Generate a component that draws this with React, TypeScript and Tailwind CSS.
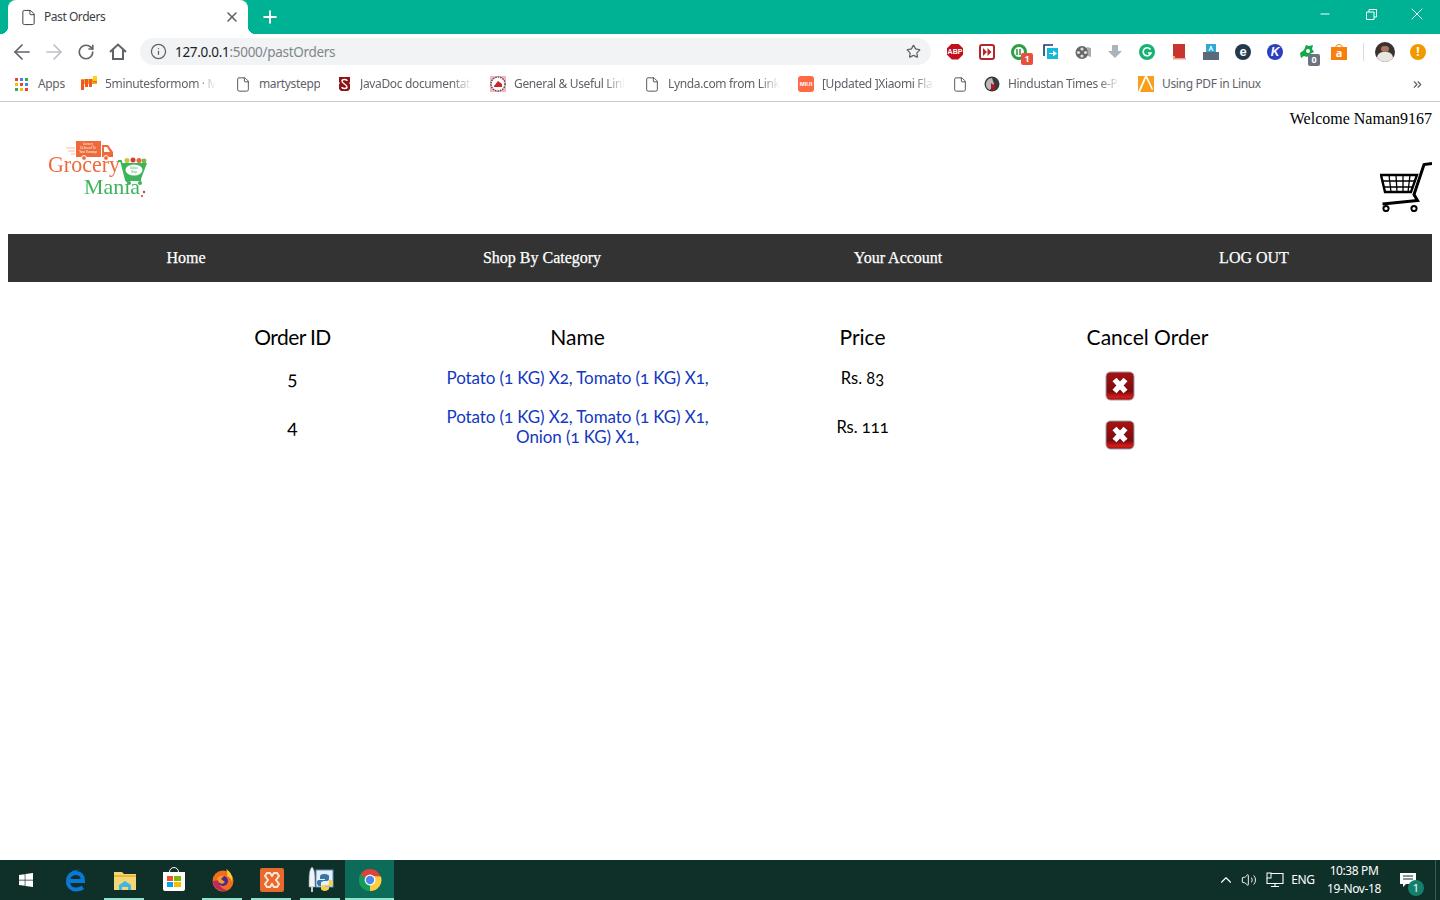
import { ArrowLeft, ArrowRight, ChevronsRight, ChevronUp, File, Info, Minus, Plus, RotateCw, Star, Volume2, X } from "lucide-react";
import { FaWindows } from "react-icons/fa";
import type { ReactNode } from "react";

const uiFont = "font-['Noto_Sans','Open_Sans',sans-serif]";

function AppsIcon() {
  const colors = ["#ea4335", "#4285f4", "#34a853", "#fbbc05", "#ea4335", "#4285f4", "#34a853", "#fbbc05", "#ea4335"];
  return (
    <div className="grid grid-cols-3 gap-[2px] w-[13px] h-[13px]">
      {colors.map((c, i) => (
        <span key={i} className="w-[3px] h-[3px]" style={{ background: c }} />
      ))}
    </div>
  );
}

function PageIcon() {
  return <File size={17} strokeWidth={1.4} className="text-[#4a4d51]" />;
}

function FiveMinIcon() {
  return (
    <svg width="16" height="16" viewBox="0 0 16 16">
      <rect x="0" y="3" width="16" height="5" fill="#f7a11a" />
      <path d="M0 4h3v10H0zM4 3h3v8H4zM8 3h3v8H8zM12 1l4-1v6h-4z" fill="#ef5a24" />
      <path d="M12 0h4v5h-4z" fill="#fbd11a" />
    </svg>
  );
}

function StanfordIcon() {
  return (
    <svg width="13" height="16" viewBox="0 0 13 16">
      <path d="M1 1h11v5l-1 1 1 1v5l-2 2H3l-2-2V8l1-1-1-1z" fill="#8c1515" />
      <path d="M4 5c0-2 5-2 5 0M4 5c0 3 5 3 5 6 0 2-5 2-5 0" fill="none" stroke="#fff" strokeWidth="1.4" />
    </svg>
  );
}

function SealIcon() {
  return (
    <svg width="16" height="16" viewBox="0 0 16 16">
      <rect width="16" height="16" fill="#f7b2c4" />
      <circle cx="8" cy="8" r="7" fill="#fff" stroke="#4a4a3a" strokeWidth="1.4" strokeDasharray="1.5 1" />
      <path d="M4 10l4-5 4 3v3H4z" fill="#c8262c" />
    </svg>
  );
}

function MiuiIcon() {
  return (
    <div className="w-4 h-4 rounded-[3px] bg-[#ff6a45] flex items-center justify-center text-white text-[6px] font-bold tracking-normal font-['Liberation_Sans',sans-serif]">
      MIUI
    </div>
  );
}

function CursorIcon() {
  return (
    <svg width="16" height="16" viewBox="0 0 16 16">
      <circle cx="8" cy="8" r="7.5" fill="#3a3a3a" />
      <path d="M2 8a6 6 0 0 1 6-6l2 6-4 6a6 6 0 0 1-4-6z" fill="#bbb" />
      <path d="M7 7l5 4-2 .5 1 3-1.5.5-1-3-1.5 1z" fill="#c8101a" />
    </svg>
  );
}

function PdfIcon() {
  return (
    <svg width="16" height="16" viewBox="0 0 16 16">
      <rect width="16" height="16" fill="#f8a01c" />
      <path d="M0 16L7 0h2L2 16zM9 0l6 13-1 1L8 2z" fill="#fff" />
    </svg>
  );
}

function Bookmark({ icon, label, width, fade }: { icon: ReactNode; label: string; width?: string; fade?: boolean }) {
  return (
    <div className="flex items-center gap-2 shrink-0">
      <div className="w-4 flex justify-center">{icon}</div>
      <span className={`${width ?? ""} overflow-hidden whitespace-nowrap ${fade ? "[mask-image:linear-gradient(to_right,black_82%,transparent)]" : ""}`}>{label}</span>
    </div>
  );
}

function Slot({ children }: { children: ReactNode }) {
  return <div className="w-8 flex justify-center items-center shrink-0">{children}</div>;
}

function ExtensionIcons() {
  return (
    <div className="flex items-center">
      <Slot>
        <div className="w-4 h-4 bg-[#c4101c] [clip-path:polygon(30%_0,70%_0,100%_30%,100%_70%,70%_100%,30%_100%,0_70%,0_30%)] text-white text-[7px] font-bold leading-4 text-center font-['Liberation_Sans',sans-serif]">ABP</div>
      </Slot>
      <Slot>
        <div className="w-4 h-4 rounded-[3px] border-2 border-[#b3262c] flex items-center justify-center">
          <svg width="9" height="8" viewBox="0 0 9 8"><path d="M0 0l4 4-4 4zM4.500 0l4 4-4 4z" fill="#b3262c" /></svg>
        </div>
      </Slot>
      <Slot>
        <div className="relative">
          <svg width="16" height="16" viewBox="0 0 16 16">
            <circle cx="8" cy="8" r="6.500" fill="none" stroke="#2f9e44" strokeWidth="3" />
            <path d="M6 5v6M9 5v6" stroke="#2f9e44" strokeWidth="1.6" />
          </svg>
          <span className="absolute left-[10px] top-[9px] w-3 h-3 rounded-[2px] bg-[#e8503e] text-white text-[9px] font-bold leading-3 text-center">1</span>
        </div>
      </Slot>
      <Slot>
        <svg width="16" height="16" viewBox="0 0 16 16">
          <path d="M1 12V1h9" fill="none" stroke="#133d6b" strokeWidth="1.6" />
          <rect x="4" y="4" width="11" height="11" fill="#16b8dc" />
          <path d="M6 9h4V6.500l4 3-4 3V10H6z" fill="#fff" />
        </svg>
      </Slot>
      <Slot>
        <svg width="16" height="16" viewBox="0 0 16 16">
          <circle cx="7" cy="8.500" r="6.500" fill="#666" />
          <circle cx="7" cy="5" r="1.6" fill="#ddd" /><circle cx="3.500" cy="8.500" r="1.6" fill="#ddd" />
          <circle cx="10.500" cy="8.500" r="1.6" fill="#ddd" /><circle cx="7" cy="12" r="1.6" fill="#ddd" />
          <path d="M12 3l4 1v9l-3-1z" fill="#aaa" />
        </svg>
      </Slot>
      <Slot>
        <svg width="16" height="16" viewBox="0 0 16 16"><path d="M5 1h6v6h4l-7 7-7-7h4z" fill="#aab4bc" /></svg>
      </Slot>
      <Slot>
        <div className="w-4 h-4 rounded-full bg-[#15b374] flex items-center justify-center">
          <svg width="10" height="10" viewBox="0 0 10 10"><path d="M8.500 2.500A4 4 0 1 0 9 6H6" fill="none" stroke="#fff" strokeWidth="1.6" /></svg>
        </div>
      </Slot>
      <Slot>
        <svg width="16" height="16" viewBox="0 0 16 16">
          <rect x="2" y="0" width="12" height="14" fill="#c8352e" />
          <rect x="2" y="14" width="13" height="1.500" fill="#e8a0a0" />
          <path d="M2 12l2 0 0 3-1-1-1 1z" fill="#e8b93a" />
        </svg>
      </Slot>
      <Slot>
        <svg width="16" height="16" viewBox="0 0 16 16">
          <rect x="3" y="0" width="10" height="9" fill="#31a9d8" />
          <path d="M0 8h16v8H0z" fill="#5a6a78" />
          <path d="M6 7l2-5 2 5M7 5h2" fill="none" stroke="#fff" strokeWidth="1" />
        </svg>
      </Slot>
      <Slot>
        <div className="w-4 h-4 rounded-full bg-[#22394d] flex items-center justify-center text-white text-[13px] font-bold leading-none font-['Liberation_Sans',sans-serif]">e</div>
      </Slot>
      <Slot>
        <div className="w-4 h-4 rounded-full bg-[#2b3fbf] flex items-center justify-center text-white text-[12px] italic font-bold leading-none font-['Liberation_Sans',sans-serif]">K</div>
      </Slot>
      <Slot>
        <div className="relative">
          <svg width="16" height="16" viewBox="0 0 16 16">
            <path d="M1 9l4-3 2-5 3 1 4-1-1 4 2 3-4 2-3 3-3-1-3 2z" fill="#12a84a" />
            <circle cx="9" cy="7" r="2" fill="#fff" />
          </svg>
          <span className="absolute left-[9px] top-[10px] w-3 h-3 rounded-[2px] bg-[#6c7280] text-white text-[9px] font-bold leading-3 text-center">0</span>
        </div>
      </Slot>
      <Slot>
        <div className="relative w-4 h-4 mt-[1px]">
          <div className="absolute left-[4px] top-0 w-2 h-[6px] rounded-t-full border border-[#f77f0e]" />
          <div className="absolute left-0 top-[3px] w-4 h-[13px] bg-[#f77f0e] text-white text-[11px] font-bold leading-[12px] text-center">a</div>
        </div>
      </Slot>
    </div>
  );
}

function Toolbar() {
  return (
    <div className="h-[34px] pt-[1px] flex items-center bg-white">
      <div className="w-[6px]" />
      <Slot><ArrowLeft size={24} strokeWidth={1.7} className="text-[#5f6368]" /></Slot>
      <Slot><ArrowRight size={24} strokeWidth={1.7} className="text-[#bdc1c6]" /></Slot>
      <Slot><RotateCw size={18} strokeWidth={2.2} className="text-[#5f6368]" /></Slot>
      <Slot>
        <svg width="18" height="17" viewBox="0 0 18 17">
          <path d="M1 9l8-7.500L17 9M4 7v9h10V7" fill="none" stroke="#5f6368" strokeWidth="2" />
        </svg>
      </Slot>
      <div className="w-[6px]" />
      <div className="w-[791px] h-[27px] rounded-full bg-[#f1f3f4] flex items-center pl-[10px] pr-[10px] shrink-0">
        <Info size={17} strokeWidth={1.8} className="text-[#5f6368]" />
        <span className="ml-[8px] mt-[2px] text-[13.5px] tracking-[-0.3px] text-[#202124]">127.0.0.1<span className="text-[#80868b]">:5000/pastOrders</span></span>
        <Star size={15} strokeWidth={2} className="ml-auto text-[#5f6368]" />
      </div>
      <div className="w-2" />
      <ExtensionIcons />
      <div className="w-[8px]" />
      <div className="w-px h-[18px] bg-[#dadce0]" />
      <div className="w-[11px]" />
      <div className="w-5 h-5 rounded-full bg-[#3b3230] overflow-hidden flex flex-col items-center">
        <div className="w-2 h-[9px] mt-1 rounded-full bg-[#a9785c]" />
        <div className="w-4 h-3 bg-[#e9e5df] rounded-t-md" />
      </div>
      <div className="w-[15px]" />
      <div className="w-4 h-4 rounded-full bg-[#f29900] text-white text-[12px] font-bold leading-4 text-center">!</div>
    </div>
  );
}

function BookmarksBar() {
  return (
    <div className="h-[34px] pb-[1px] flex items-center text-[12px] tracking-[-0.35px] text-[#5f6368] border-b border-[#c9cbce] pl-[15px] bg-white">
      <div className="flex items-center gap-[10px] shrink-0">
        <AppsIcon />
        <span className="w-[28px]">Apps</span>
      </div>
      <div className="w-[15px] shrink-0" />
      <Bookmark icon={<FiveMinIcon />} label="5minutesformom · Mo" width="w-[111px]" fade />
      <div className="w-[19px] shrink-0" />
      <Bookmark icon={<PageIcon />} label="martystepp" width="w-[61px]" />
      <div className="w-[16px] shrink-0" />
      <Bookmark icon={<StanfordIcon />} label="JavaDoc documentation" width="w-[112px]" fade />
      <div className="w-[18px] shrink-0" />
      <Bookmark icon={<SealIcon />} label="General & Useful Links" width="w-[111px]" fade />
      <div className="w-[19px] shrink-0" />
      <Bookmark icon={<PageIcon />} label="Lynda.com from Linked" width="w-[112px]" fade />
      <div className="w-[18px] shrink-0" />
      <Bookmark icon={<MiuiIcon />} label="[Updated ]Xiaomi Flash" width="w-[112px]" fade />
      <div className="w-[18px] shrink-0" />
      <div className="w-4 flex justify-center shrink-0"><PageIcon /></div>
      <div className="w-[16px] shrink-0" />
      <Bookmark icon={<CursorIcon />} label="Hindustan Times e-Paper" width="w-[112px]" fade />
      <div className="w-[18px] shrink-0" />
      <Bookmark icon={<PdfIcon />} label="Using PDF in Linux" />
      <ChevronsRight size={13} strokeWidth={2.2} className="ml-auto mr-[16px] text-[#5f6368]" />
    </div>
  );
}

function Logo() {
  return (
    <svg width="100" height="60" viewBox="0 0 100 60" className="blur-[0.3px]">
      <path d="M29 1h25v16H29zM55 5h6l5 7v5H55z" fill="#ef6a3a" />
      <path d="M57 7h3l3 5h-6z" fill="#fff" />
      <circle cx="37" cy="18" r="2.400" fill="#ef6a3a" stroke="#fff" />
      <circle cx="59" cy="18" r="2.400" fill="#ef6a3a" stroke="#fff" />
      <path d="M19 8h9M21 11h7M24 14h4" stroke="#f6a98c" strokeWidth="0.8" />
      <text x="41" y="5" fontSize="3" fill="#fff" textAnchor="middle" fontFamily="Liberation Serif, serif">Grocery</text>
      <text x="41" y="9" fontSize="3" fill="#fff" textAnchor="middle" fontFamily="Liberation Serif, serif">Delivered To</text>
      <text x="41" y="13" fontSize="3" fill="#fff" textAnchor="middle" fontFamily="Liberation Serif, serif">Your Doorstep</text>
      <text x="1" y="32" fontSize="23" fill="#ef6a3a" textLength="72" lengthAdjust="spacingAndGlyphs" fontFamily="Liberation Serif, serif">Grocery</text>
      <text x="37" y="54" fontSize="22" fill="#3cb55a" textLength="56" lengthAdjust="spacingAndGlyphs" fontFamily="Liberation Serif, serif">Mania</text>
      <path d="M71 21h3l5 19h15" fill="none" stroke="#3cb55a" strokeWidth="1.8" />
      <path d="M75 23h25l-6 16H79z" fill="#3cb55a" />
      <ellipse cx="87" cy="30" rx="8.500" ry="5.500" fill="#fff" />
      <text x="87" y="29" fontSize="3" fill="#3cb55a" textAnchor="middle" fontFamily="Liberation Serif, serif">Online</text>
      <text x="87" y="33" fontSize="3" fill="#3cb55a" textAnchor="middle" fontFamily="Liberation Serif, serif">Shop</text>
      <circle cx="80" cy="20.500" r="2.500" fill="#c8c43a" /><circle cx="86" cy="20" r="2.500" fill="#d8383a" />
      <circle cx="92" cy="20.500" r="2.500" fill="#e06a3a" /><circle cx="97" cy="21" r="2.400" fill="#7ab648" />
      <circle cx="82" cy="43" r="2" fill="#3cb55a" /><circle cx="93" cy="43" r="2" fill="#3cb55a" />
      <circle cx="97" cy="52" r="1.200" fill="#d8383a" /><circle cx="95" cy="56" r="1" fill="#d8383a" />
    </svg>
  );
}

function CartIcon() {
  return (
    <svg width="52" height="50" viewBox="0 0 52 50">
      <path d="M52 1.500l-8 1-10 30 3.500 6-35 3.500" fill="none" stroke="#000" strokeWidth="3" />
      <path d="M1 13h36l-6 17H5z" fill="none" stroke="#000" strokeWidth="2.400" />
      <path d="M9 13l2 17M16 13l1 17M23 13v17M30 13l-2 17M2.500 19h33M4 25h29" stroke="#000" strokeWidth="1.300" />
      <circle cx="6" cy="46.500" r="2.600" fill="none" stroke="#000" strokeWidth="2" />
      <circle cx="34" cy="46.500" r="2.600" fill="none" stroke="#000" strokeWidth="2" />
    </svg>
  );
}

function CancelIcon() {
  return (
    <svg width="30" height="30" viewBox="0 0 30 30">
      <defs>
        <linearGradient id="cancelRed" x1="0" y1="0" x2="0" y2="1">
          <stop offset="0" stopColor="#a51414" />
          <stop offset="0.7" stopColor="#7d0b0b" />
          <stop offset="0.9" stopColor="#d81c1c" />
          <stop offset="1" stopColor="#8c0f0f" />
        </linearGradient>
      </defs>
      <rect x="1" y="1" width="28" height="28" rx="4.500" fill="url(#cancelRed)" stroke="#9aa0a8" strokeWidth="1" />
      <path d="M9.500 8.500L20.500 20.500M20.500 8.500L9.500 20.500" stroke="#fff" strokeWidth="5.500" />
    </svg>
  );
}

const orders = [
  { id: 5, name: ["Potato (1 KG) X2, Tomato (1 KG) X1,"], price: "Rs. 83" },
  { id: 4, name: ["Potato (1 KG) X2, Tomato (1 KG) X1,", "Onion (1 KG) X1,"], price: "Rs. 111" },
];

function OrdersTable() {
  return (
    <div className="w-[1140px] mx-auto pt-[33px] font-['Lato',sans-serif] text-black [font-feature-settings:'onum']">
      <div className="grid grid-cols-4 h-[46px] pb-[2px] items-center text-center text-[21px]">
        <div className="tracking-[-0.6px]">Order ID</div>
        <div>Name</div>
        <div>Price</div>
        <div>Cancel Order</div>
      </div>
      {orders.map((o) => (
        <div key={o.id} className="grid grid-cols-4 h-[49px] items-start text-center leading-5">
          <div className="h-[33px] flex items-center justify-center text-[19px]">{o.id}</div>
          <div className="h-[34px] flex flex-col justify-center text-[17px] tracking-[-0.1px] text-[#1338be]">
            {o.name.map((line) => (
              <div key={line}>{line}</div>
            ))}
          </div>
          <div className="h-[34px] flex items-center justify-center text-[16.5px]">{o.price}</div>
          <div className="pt-[10px] pl-[100px] flex"><CancelIcon /></div>
        </div>
      ))}
    </div>
  );
}

function ChromeLogo() {
  return (
    <svg width="24" height="24" viewBox="0 0 24 24">
      <circle cx="12" cy="12" r="11" fill="#db4437" />
      <path d="M12 12L2.400 6.500A11 11 0 0 0 12 23z" fill="#0f9d58" />
      <path d="M12 12l0 11A11 11 0 0 0 22.900 8.500L12 8z" fill="#ffcd40" />
      <circle cx="12" cy="12" r="5.400" fill="#fff" />
      <circle cx="12" cy="12" r="4.200" fill="#4e85f4" />
    </svg>
  );
}

function TaskSlot({ children, open, active, wide }: { children: ReactNode; open?: boolean; active?: boolean; wide?: boolean }) {
  return (
    <div className={`relative ${wide ? "w-[51px]" : "w-[49px]"} h-full flex items-center justify-center ${active ? "bg-[#0d6b5a]" : ""}`}>
      {children}
      {open && <div className={`absolute bottom-0 h-[2px] bg-[#8fe3cf] ${active ? "left-0 right-0" : "left-1 right-[5px]"}`} />}
    </div>
  );
}

function Taskbar() {
  return (
    <div className={`h-10 bg-[#0f2f29] flex items-center shrink-0 ${uiFont} text-white`}>
      <TaskSlot wide><FaWindows size={16} /></TaskSlot>
      <TaskSlot>
        <svg width="22" height="24" viewBox="0 0 22 24">
          <path d="M3 13h15c0-5-2.500-8-7-8-5 0-8 3.500-8 8.500 0 5 3.500 8 8 8 3 0 5-.7 7-2" fill="none" stroke="#0a78d4" strokeWidth="4" />
          <path d="M1 12C3 4 10 1 15 2c-5 0-9 3-10 8z" fill="#0a78d4" />
        </svg>
      </TaskSlot>
      <TaskSlot open>
        <svg width="22" height="20" viewBox="0 0 22 20">
          <path d="M0 2h8l2 2h12v16H0z" fill="#f4d675" />
          <path d="M0 5h22v2H0z" fill="#e8b93a" />
          <path d="M5 20v-5l6-4 6 4v5h-3v-3H8v3z" fill="#3fb6e8" />
        </svg>
      </TaskSlot>
      <TaskSlot>
        <div className="relative w-[22px] h-[19px] mt-[3px] bg-white rounded-b-[2px] grid grid-cols-2 gap-[1px] p-[4px]">
          <div className="absolute left-[6px] -top-[5px] w-[10px] h-[7px] border border-white rounded-t-full" />
          <span className="bg-[#f25022]" /><span className="bg-[#7fba00]" /><span className="bg-[#00a4ef]" /><span className="bg-[#ffb900]" />
        </div>
      </TaskSlot>
      <TaskSlot open>
        <svg width="24" height="24" viewBox="0 0 24 24">
          <circle cx="12" cy="13" r="10.500" fill="#f26b21" />
          <path d="M2 13a10.500 10.500 0 0 0 15 9c-6 0-10-5-9-10z" fill="#c1285c" />
          <circle cx="12" cy="13" r="5" fill="#4a2a8f" />
          <path d="M15 1c5 3 7 8 6 13-1-4-3-5-5-6 1-2 0-5-1-7z" fill="#ffcb2e" />
          <path d="M6 11c1-3 4-4 7-3l-3 3 4 3c-2 3-6 2-7-1z" fill="#f69a24" />
        </svg>
      </TaskSlot>
      <TaskSlot open>
        <div className="w-6 h-6 rounded-[2px] bg-[#e8692c] flex items-center justify-center">
          <svg width="18" height="18" viewBox="0 0 18 18"><path d="M4 2h3l2 3 2-3h3l2 3-3 4 3 4-2 3h-3l-2-3-2 3H4l-2-3 3-4-3-4z" fill="none" stroke="#fbe6d6" strokeWidth="2" /></svg>
        </div>
      </TaskSlot>
      <TaskSlot open>
        <svg width="26" height="26" viewBox="0 0 26 26">
          <rect x="8" y="3" width="17" height="17" fill="#e6f0f8" stroke="#5b8fc4" />
          <path d="M4 0c3 3 3 8 3 20H1C1 8 1 3 4 0z" fill="#f1f3f6" stroke="#8a98a6" strokeWidth="0.6" />
          <path d="M3 20h2v5H3z" fill="#c8ccd2" />
          <path d="M17 7c-4 0-5 1-5 3v2h5v1h-6c-2 0-2 2-2 3s1 3 2 3h2v-3c0-1 1-2 3-2h3c1 0 2-1 2-2v-3c0-1-2-2-4-2z" fill="#3a75a8" />
          <path d="M21 13v3c0 2-1 2-3 2h-3c-1 0-2 1-2 2v2c0 2 6 3 8 0v-2h-4v-1h6c2 0 2-2 2-3s-1-3-2-3z" fill="#f7d14c" />
        </svg>
      </TaskSlot>
      <TaskSlot open active><ChromeLogo /></TaskSlot>
      <div className="ml-auto flex items-center h-full">
        <ChevronUp size={18} strokeWidth={1.5} />
        <Volume2 size={16} strokeWidth={1.4} className="ml-[6px]" />
        <svg width="18" height="16" viewBox="0 0 18 16" className="ml-[9px]">
          <path d="M5 1.500h12v10H1V6M9 11.500v3M5 14.500h8" fill="none" stroke="#fff" strokeWidth="1.100" />
          <rect x="1" y="1" width="4" height="5" fill="none" stroke="#fff" strokeWidth="1" />
        </svg>
        <span className="ml-[7px] w-[24px] text-[12px] tracking-[-0.3px] text-center">ENG</span>
        <div className="ml-[11px] w-[56px] text-[12px] tracking-[-0.4px] text-center leading-[18px] whitespace-nowrap">
          <div>10:38 PM</div>
          <div>19-Nov-18</div>
        </div>
        <div className="relative ml-[18px] w-[24px] h-full flex items-center">
          <svg width="16" height="15" viewBox="0 0 16 15"><path d="M0 0h16v11H6l-3 3v-3H0z" fill="#fff" /><path d="M3 3h10M3 6h10" stroke="#0f2f29" /></svg>
          <span className="absolute left-[8px] top-[20px] w-4 h-4 rounded-full bg-[#14806c] text-[11px] leading-4 text-center">1</span>
        </div>
        <div className="ml-[11px] mr-[4px] w-px h-full bg-[#3c5a54]" />
      </div>
    </div>
  );
}

export default function App() {
  return (
    <div className="w-[1440px] h-[900px] flex flex-col overflow-hidden bg-white">
      <div className={`h-[34px] bg-[#00b294] flex items-end text-white shrink-0 ${uiFont}`}>
        <div className="relative ml-2 w-[240px] h-[34px] bg-white rounded-t-lg flex items-center text-[#3c4043]">
          <span className="absolute -left-2 bottom-0 w-2 h-2 bg-white [mask-image:radial-gradient(circle_at_0_0,transparent_8px,black_8.5px)]" />
          <span className="absolute -right-2 bottom-0 w-2 h-2 bg-white [mask-image:radial-gradient(circle_at_100%_0,transparent_8px,black_8.5px)]" />
          <File size={17} strokeWidth={1.4} className="ml-[12px]" />
          <span className="ml-[7px] text-[12px] tracking-[-0.45px]">Past Orders</span>
          <X size={16} strokeWidth={2.4} className="ml-auto mr-[8px] text-[#5f6368]" />
        </div>
        <Plus size={20} strokeWidth={2.4} className="ml-[12px] mb-[7px]" />
        <div className="ml-auto flex self-start h-[28px] items-center">
          <div className="w-[46px] flex justify-center"><Minus size={14} strokeWidth={1.7} /></div>
          <div className="w-[46px] flex justify-center">
            <svg width="11" height="11" viewBox="0 0 11 11"><path d="M.5 3h7.500v7.500H.5zM3 3V.5h7.500V8H8" fill="none" stroke="#fff" /></svg>
          </div>
          <div className="w-[46px] flex justify-center"><X size={20} strokeWidth={1.2} /></div>
        </div>
      </div>
      <div className={uiFont}>
        <Toolbar />
        <BookmarksBar />
      </div>
      <div className="flex-1 font-['Liberation_Serif',serif]">
        <div className="h-[132px] px-2 flex flex-col text-black">
          <div className="pt-[5px] text-right text-[16px] leading-6">Welcome Naman9167</div>
          <div className="flex justify-between items-start">
            <div className="ml-[39px] mt-[9px]"><Logo /></div>
            <div className="mt-[31px]"><CartIcon /></div>
          </div>
        </div>
        <div className="mx-2 h-12 grid grid-cols-4 items-center bg-[#333333] text-white text-center text-[16px] [-webkit-text-stroke:0.25px_white]">
          <div>Home</div>
          <div>Shop By Category</div>
          <div>Your Account</div>
          <div>LOG OUT</div>
        </div>
        <OrdersTable />
      </div>
      <Taskbar />
    </div>
  );
}
